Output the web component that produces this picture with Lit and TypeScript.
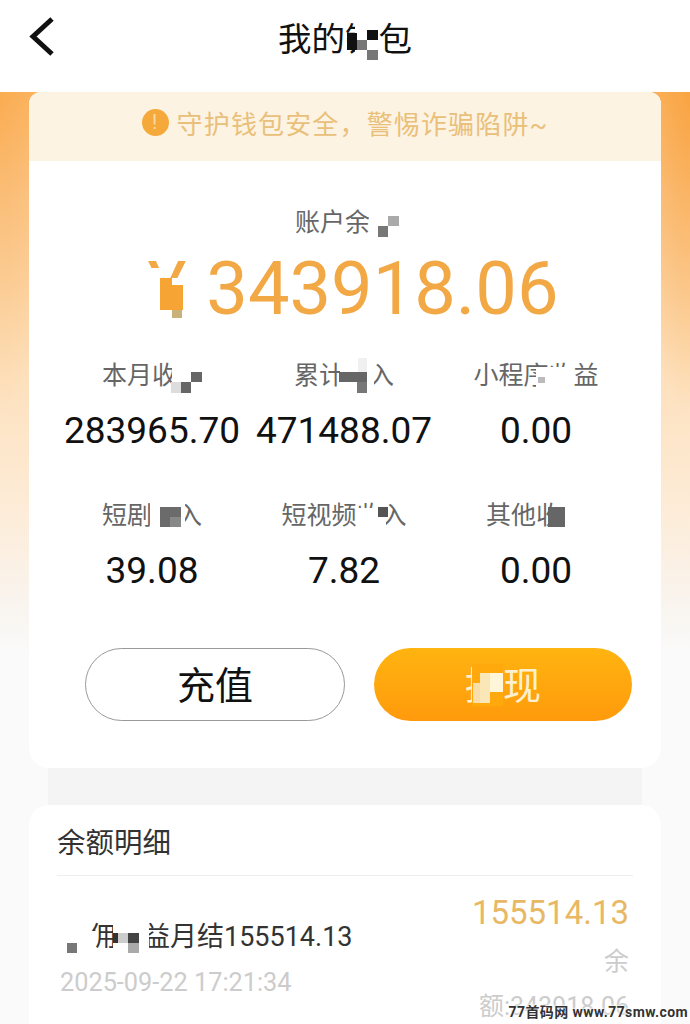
import { LitElement, html, css } from 'lit';
import { customElement } from 'lit/decorators.js';

// [x, y, w, h, colour] of the censor blocks, in page pixels
const mosaic: [number, number, number, number, string][] = [
  // title
  [355, 20, 24, 42, '#fff'],
  [347, 33, 10, 17, '#111'],
  [367, 30, 11, 10, '#111'],
  [357, 40, 10, 10, '#777'],
  [367, 50, 11, 10, '#777'],
  // balance label
  [369, 205, 34, 34, '#fff'],
  [388, 216, 11, 10, '#aaa'],
  [378, 226, 10, 11, '#777'],
  // currency sign
  [145, 268, 18, 10, '#fff'],
  [145, 278, 45, 40, '#fff'],
  [160, 278, 12, 32, '#f6a535'],
  [172, 285, 11, 25, '#f6a535'],
  [172, 310, 10, 8, '#c9b27a'],
  // labels row 1
  [172, 358, 32, 37, '#fff'],
  [191, 372, 11, 10, '#666'],
  [181, 382, 10, 11, '#666'],
  [171, 382, 10, 11, '#ddd'],
  [340, 358, 34, 37, '#fff'],
  [358, 358, 9, 14, '#f0f0f0'],
  [339, 372, 28, 10, '#666'],
  [357, 382, 10, 11, '#777'],
  [536, 367, 38, 28, '#fff'],
  [538, 377, 7, 6, '#bbb'],
  // labels row 2
  [150, 497, 35, 35, '#fff'],
  [160, 507, 21, 20, '#6b6b6b'],
  [170, 517, 11, 10, '#888'],
  [357, 508, 29, 24, '#fff'],
  [378, 507, 10, 10, '#555'],
  [565, 497, 26, 35, '#fff'],
  [548, 507, 17, 20, '#666'],
  // row title
  [60, 920, 29, 36, '#fff'],
  [67, 943, 10, 10, '#777'],
  [88, 931, 8, 25, '#fff'],
  [113, 920, 36, 36, '#fff'],
  [113, 933, 5, 10, '#333'],
  [118, 933, 10, 10, '#ccc'],
  [128, 933, 11, 10, '#444'],
  [128, 943, 11, 10, '#aaa'],
  // withdraw button
  [472, 664, 31, 42, '#ffa90c'],
  [473, 683, 7, 20, '#f8deaa'],
  [480, 673, 10, 30, '#fbe6b8'],
  [490, 673, 13, 19, '#fff5d8'],
];

@customElement('app-root')
export class AppRoot extends LitElement {
  static override styles = css`
    :host {
      display: block;
      position: relative;
      width: 690px;
      height: 1024px;
      overflow: hidden;
      background: #fff;
      font-family: 'Roboto', 'Noto Sans CJK SC', sans-serif;
    }
    .header {
      height: 92px;
      display: flex;
      align-items: center;
      justify-content: center;
      position: relative;
      background: #fff;
    }
    .header h1 {
      margin: 0 0 20px;
      font-size: 33.5px;
      font-weight: 400;
      color: #111;
    }
    .back {
      position: absolute;
      left: 29px;
      top: 17px;
    }
    .page {
      height: 932px;
      padding: 0 29px;
      box-sizing: border-box;
      display: flex;
      flex-direction: column;
      background: radial-gradient(60px 320px at 0 0, rgba(248, 150, 40, 0.35), rgba(248, 150, 40, 0)),
        radial-gradient(60px 320px at 100% 0, rgba(248, 150, 40, 0.6), rgba(248, 150, 40, 0)),
        linear-gradient(180deg, #fbb868 0, #fbc98e 100px, #fde0bc 280px, #fdecd8 420px, #f9f4ee 510px, #fafafa 560px);
    }
    .card {
      background: #fff;
      border-radius: 12px 12px 20px 20px;
      overflow: hidden;
    }
    .gap {
      height: 37px;
      margin: 0 19px;
      background: #f4f4f4;
    }
    .notice {
      height: 69px;
      box-sizing: border-box;
      padding-bottom: 8px;
      background: #fdf3e3;
      display: flex;
      align-items: center;
      justify-content: center;
      gap: 8px;
      color: #e9c07a;
      font-size: 26px;
      letter-spacing: 1.15px;
    }
    .notice i {
      width: 27px;
      height: 27px;
      border-radius: 50%;
      background: #f6a93b;
      color: #fbd9a8;
      font: 400 20px/27px 'Roboto', sans-serif;
      font-style: normal;
      text-align: center;
    }
    .balance {
      margin-top: 44px;
      text-align: center;
      color: #666;
      font-size: 25px;
      line-height: 36px;
    }
    .amount {
      margin-top: 6px;
      padding-left: 16px;
      display: flex;
      justify-content: center;
      align-items: center;
      gap: 20px;
      height: 84px;
      color: #f2a845;
      font-size: 74px;
      line-height: 84px;
    }
    .stats {
      margin-top: 27px;
      padding: 0 27px;
      display: grid;
      grid-template-columns: repeat(3, 192px);
      grid-auto-rows: 140px;
    }
    .stat {
      text-align: center;
    }
    .stat span {
      display: block;
      color: #666;
      font-size: 25px;
      line-height: 36px;
    }
    .stat b {
      display: block;
      margin-top: 16px;
      color: #111;
      font-size: 37px;
      font-weight: 400;
      line-height: 42px;
    }
    .actions {
      margin-top: 10px;
      padding: 0 29px 47px 56px;
      display: flex;
      gap: 29px;
    }
    .btn {
      flex: 1;
      height: 73px;
      box-sizing: border-box;
      padding-bottom: 4px;
      border-radius: 37px;
      display: flex;
      align-items: center;
      justify-content: center;
      font-size: 38px;
    }
    .btn.plain {
      border: 1px solid #999;
      color: #111;
    }
    .btn.main {
      background: linear-gradient(180deg, #ffb410, #ff9a0c);
      color: #fdf0d0;
    }
    .detail {
      flex: 1;
      padding: 0 28px;
      border-radius: 20px 20px 0 0;
    }
    .detail h2 {
      margin: 0;
      height: 70px;
      display: flex;
      align-items: center;
      font-size: 28.5px;
      font-weight: 400;
      color: #333;
      border-bottom: 1px solid #eee;
    }
    .row {
      display: flex;
      justify-content: space-between;
    }
    .row-title {
      margin-top: 41px;
      padding-left: 5px;
      color: #333;
      font-size: 27px;
      line-height: 40px;
    }
    .row-date {
      margin-top: 8px;
      padding-left: 3px;
      color: #ccc;
      font-size: 25.3px;
      line-height: 36px;
    }
    .row-right {
      width: 170px;
      margin-right: 4px;
      text-align: right;
      color: #ccc;
      font-size: 25px;
    }
    .row-right b {
      display: block;
      margin-top: 15px;
      color: #e8b865;
      font-size: 33px;
      font-weight: 400;
      line-height: 44px;
    }
    .row-right span {
      display: block;
      margin-top: 4px;
      line-height: 45px;
    }
    .mosaic {
      position: absolute;
      inset: 0;
      pointer-events: none;
    }
    .mosaic i {
      position: absolute;
    }
    .mark {
      position: absolute;
      right: 2px;
      bottom: 3px;
      color: #333;
      font-size: 14px;
      font-weight: 700;
      letter-spacing: 0.4px;
      text-shadow: 0 0 3px #fff, 0 0 3px #fff, 0 0 3px #fff;
    }
  `;

  private stats = [
    ['本月收入', '283965.70'],
    ['累计收入', '471488.07'],
    ['小程序收益', '0.00'],
    ['短剧收入', '39.08'],
    ['短视频收入', '7.82'],
    ['其他收入', '0.00'],
  ];

  override render() {
    return html`
      <div class="header">
        <svg class="back" width="26" height="40" viewBox="0 0 26 40" fill="none">
          <path d="M23 2 L4 19.5 L23 37" stroke="#111" stroke-width="5" />
        </svg>
        <h1>我的钱包</h1>
      </div>
      <div class="page">
        <div class="card">
          <div class="notice"><i>!</i>守护钱包安全，警惕诈骗陷阱~</div>
          <div class="balance">账户余额</div>
          <div class="amount"><span>¥</span><span>343918.06</span></div>
          <div class="stats">
            ${this.stats.map(
              ([label, value]) => html`<div class="stat"><span>${label}</span><b>${value}</b></div>`
            )}
          </div>
          <div class="actions">
            <div class="btn plain">充值</div>
            <div class="btn main">提现</div>
          </div>
        </div>
        <div class="gap"></div>
        <div class="card detail">
          <h2>余额明细</h2>
          <div class="row">
            <div>
              <div class="row-title">分佣收益月结155514.13</div>
              <div class="row-date">2025-09-22 17:21:34</div>
            </div>
            <div class="row-right">
              <b>155514.13</b>
              <span>余额:343918.06</span>
            </div>
          </div>
        </div>
      </div>
      <div class="mosaic">
        ${mosaic.map(
          ([x, y, w, h, c]) =>
            html`<i style="left:${x}px;top:${y}px;width:${w}px;height:${h}px;background:${c}"></i>`
        )}
      </div>
      <div class="mark">77首码网 www.77smw.com</div>
    `;
  }
}
